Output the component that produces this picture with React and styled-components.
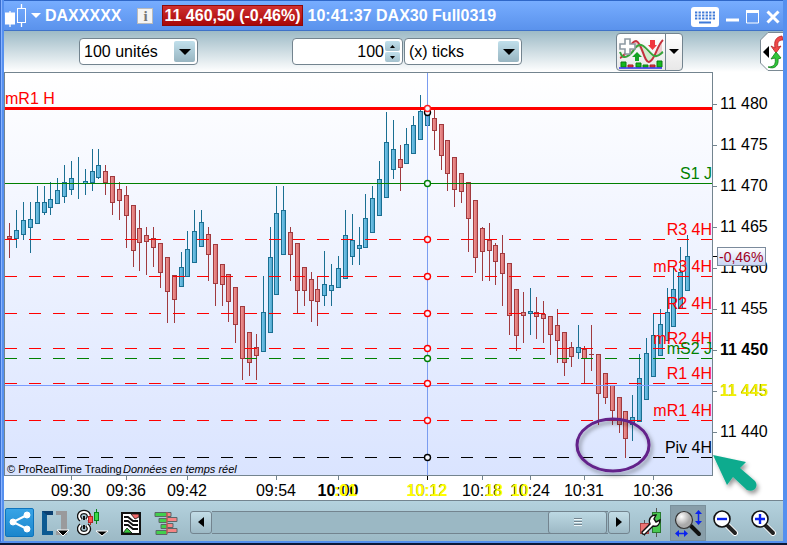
import { useState } from 'react';
import styled, { createGlobalStyle } from 'styled-components';

const UP = 1;
const DOWN = 0;

// x, high, body top, body bottom, low, direction
const candles = [
	[9, 223, 236, 239, 258, DOWN],
	[16, 210, 230, 239, 248, UP],
	[23, 202, 220, 235, 240, UP],
	[30, 202, 219, 228, 253, UP],
	[37, 186, 202, 224, 224, UP],
	[44, 186, 202, 213, 215, UP],
	[50, 182, 199, 208, 215, UP],
	[57, 178, 190, 204, 204, UP],
	[64, 165, 182, 197, 203, UP],
	[71, 161, 178, 190, 195, UP],
	[78, 157, 182, 182, 199, UP],
	[85, 169, 181, 184, 195, UP],
	[92, 149, 171, 183, 191, UP],
	[98, 149, 165, 178, 179, UP],
	[105, 165, 171, 183, 195, DOWN],
	[112, 176, 176, 203, 215, DOWN],
	[119, 182, 189, 201, 220, DOWN],
	[126, 186, 195, 216, 248, DOWN],
	[133, 205, 205, 251, 267, DOWN],
	[139, 210, 228, 243, 271, DOWN],
	[146, 227, 235, 242, 275, DOWN],
	[153, 227, 238, 248, 267, DOWN],
	[160, 243, 243, 273, 288, DOWN],
	[167, 257, 257, 292, 323, DOWN],
	[174, 275, 275, 300, 323, DOWN],
	[181, 252, 267, 287, 287, UP],
	[187, 231, 249, 277, 277, UP],
	[194, 210, 231, 263, 263, UP],
	[201, 210, 222, 247, 247, UP],
	[208, 227, 234, 255, 281, DOWN],
	[215, 244, 244, 284, 306, DOWN],
	[222, 264, 264, 285, 306, DOWN],
	[228, 274, 274, 302, 322, DOWN],
	[235, 287, 287, 325, 343, DOWN],
	[242, 306, 306, 359, 380, DOWN],
	[249, 332, 332, 363, 376, DOWN],
	[256, 334, 347, 356, 380, DOWN],
	[263, 276, 312, 352, 352, UP],
	[270, 227, 257, 333, 333, UP],
	[276, 186, 213, 295, 295, UP],
	[283, 186, 210, 255, 255, UP],
	[290, 227, 232, 255, 281, DOWN],
	[297, 243, 243, 291, 313, DOWN],
	[304, 267, 267, 291, 306, DOWN],
	[311, 272, 279, 301, 322, DOWN],
	[317, 276, 289, 302, 326, DOWN],
	[324, 251, 284, 296, 306, UP],
	[331, 264, 285, 291, 306, UP],
	[338, 256, 268, 288, 288, UP],
	[345, 210, 235, 279, 279, UP],
	[352, 214, 240, 257, 265, UP],
	[359, 227, 245, 249, 265, UP],
	[365, 194, 218, 248, 248, UP],
	[372, 186, 198, 233, 233, UP],
	[379, 161, 179, 216, 216, UP],
	[386, 112, 142, 198, 198, UP],
	[393, 120, 149, 170, 179, UP],
	[400, 145, 159, 168, 191, DOWN],
	[406, 128, 144, 164, 164, UP],
	[413, 116, 125, 154, 154, UP],
	[420, 95, 111, 140, 140, UP],
	[427, 91, 113, 126, 129, UP],
	[434, 110, 118, 131, 150, DOWN],
	[441, 124, 124, 156, 170, DOWN],
	[447, 140, 140, 174, 191, DOWN],
	[454, 157, 157, 190, 207, DOWN],
	[461, 173, 173, 192, 203, DOWN],
	[468, 182, 182, 219, 252, DOWN],
	[475, 200, 200, 258, 273, DOWN],
	[482, 227, 228, 252, 281, DOWN],
	[489, 223, 240, 251, 281, DOWN],
	[495, 243, 245, 262, 285, DOWN],
	[502, 235, 253, 274, 306, DOWN],
	[509, 263, 263, 316, 335, DOWN],
	[516, 289, 289, 336, 351, DOWN],
	[523, 292, 312, 316, 343, DOWN],
	[530, 288, 311, 314, 335, UP],
	[536, 297, 312, 317, 339, DOWN],
	[543, 301, 314, 319, 343, DOWN],
	[550, 316, 316, 335, 355, DOWN],
	[557, 309, 325, 341, 363, DOWN],
	[564, 332, 332, 363, 376, DOWN],
	[571, 342, 347, 357, 367, DOWN],
	[578, 325, 347, 353, 359, UP],
	[584, 346, 349, 359, 383, DOWN],
	[591, 325, 354, 355, 371, DOWN],
	[598, 354, 354, 394, 425, DOWN],
	[605, 373, 373, 398, 404, DOWN],
	[612, 385, 385, 411, 425, DOWN],
	[619, 397, 397, 425, 433, DOWN],
	[625, 411, 411, 439, 458, DOWN],
	[632, 395, 417, 425, 441, UP],
	[639, 354, 378, 422, 422, UP],
	[646, 338, 353, 400, 400, UP],
	[653, 313, 335, 377, 377, UP],
	[660, 309, 324, 356, 356, UP],
	[667, 288, 312, 341, 341, UP],
	[673, 268, 289, 327, 327, UP],
	[680, 247, 272, 309, 309, UP],
	[687, 235, 256, 291, 291, UP],
];

const levels = [
	{ name: 'S1 J', y: 183, color: '#008000', solid: true },
	{ name: 'R3 4H', y: 239, color: '#ff0000' },
	{ name: 'mR3 4H', y: 276, color: '#ff0000' },
	{ name: 'R2 4H', y: 313, color: '#ff0000' },
	{ name: 'mR2 4H', y: 348, color: '#ff0000' },
	{ name: 'mS2 J', y: 358, color: '#008000' },
	{ name: 'R1 4H', y: 383, color: '#ff0000' },
	{ name: 'mR1 4H', y: 420, color: '#ff0000' },
	{ name: 'Piv 4H', y: 457, color: '#000000' },
];

const prices = [
	['11 480', 104],
	['11 475', 145],
	['11 470', 186],
	['11 465', 227],
	['11 460', 268],
	['11 455', 309],
	['11 450', 350, 'bold'],
	['11 445', 391],
	['11 440', 432],
];

const times = [
	['09:30', 71],
	['09:36', 126],
	['09:42', 187],
	['09:54', 276],
	['10:00', 338, 'bold'],
	['10:12', 427],
	['10:18', 482],
	['10:24', 530],
	['10:31', 584],
	['10:36', 653],
];

const Candle = ({ data }) => {
	const [x, high, top, bottom, low, dir] = data;
	const edge = dir === UP ? '#1a6f92' : '#a03a3f';
	const fill = dir === UP ? 'url(#up)' : 'url(#down)';
	const h = bottom - top;

	return (
		<g>
			<rect x={x} y={high} width='1' height={low - high} fill={edge} />
			{h > 0 && <rect x={x - 2} y={top} width='5' height={h} fill={edge} />}
			{h > 2 && <rect x={x - 1} y={top + 1} width='3' height={h - 2} fill={fill} />}
		</g>
	);
};

const Chart = () => (
	<ChartSvg viewBox='4 72 779 428' role='img' aria-label='DAX30 Full0319'>
		<defs>
			<linearGradient id='sky' x1='0' y1='0' x2='0' y2='1'>
				<stop offset='0' stopColor='#ffffff' />
				<stop offset='1' stopColor='#dae4ff' />
			</linearGradient>
			<linearGradient id='up'>
				<stop offset='0' stopColor='#76c6ea' />
				<stop offset='1' stopColor='#4fa6cd' />
			</linearGradient>
			<linearGradient id='down'>
				<stop offset='0' stopColor='#f09492' />
				<stop offset='1' stopColor='#d66e70' />
			</linearGradient>
			<linearGradient id='tag' x1='0' y1='0' x2='0' y2='1'>
				<stop offset='0' stopColor='#ffffff' />
				<stop offset='1' stopColor='#c8d4f4' />
			</linearGradient>
			<filter id='shadow' x='-30%' y='-30%' width='160%' height='160%'>
				<feDropShadow dx='2' dy='3' stdDeviation='2' floodColor='#000' floodOpacity='0.4' />
			</filter>
		</defs>

		<g shapeRendering='crispEdges'>
			<rect x='5' y='73' width='707' height='402' fill='url(#sky)' />
			<rect x='4' y='72' width='709' height='1' fill='#73848f' />
			<rect x='4' y='72' width='1' height='404' fill='#73848f' />
			<rect x='712' y='72' width='1' height='404' fill='#73848f' />
			<rect x='4' y='475' width='709' height='1' fill='#73848f' />
			{candles.map((c) => (
				<Candle key={c[0]} data={c} />
			))}
			<rect x='5' y='107' width='707' height='3' fill='#ff0000' />
			{levels.map(({ name, y, color, solid }) => (
				<line
					key={name}
					x1='5'
					x2='712'
					y1={y + 0.5}
					y2={y + 0.5}
					stroke={color}
					strokeDasharray={solid ? 'none' : '12 12'}
				/>
			))}
			<rect x='5' y='385' width='707' height='1' fill='#7a9cff' />
			<rect x='427' y='73' width='1' height='402' fill='#7a9cf0' />
			{prices.map(([label, y]) => (
				<rect key={label} x='713' y={y} width='4' height='1' fill='#73848f' />
			))}
			{times.map(([label, x]) => (
				<rect key={label} x={x} y='476' width='1' height='4' fill={x === 427 ? '#000' : '#73848f'} />
			))}
			<rect x='713' y='256' width='4' height='1' fill='#000' />
		</g>

		{/* crosshair markers */}
		<g fill='#f4f7ff' strokeWidth='1.4'>
			<circle cx='427.5' cy='112.5' r='3' stroke='#000' />
			<circle cx='427.5' cy='108.5' r='3' stroke='#ff2020' />
			{levels.map(({ name, y, color }) => (
				<circle key={name} cx='427.5' cy={y + 0.5} r='3' stroke={color} />
			))}
		</g>

		<text x='5' y='104' fill='#ff0000'>mR1 H</text>
		{levels.map(({ name, y, color }) => (
			<text key={name} x='712' y={y - 4} fill={color} textAnchor='end'>{name}</text>
		))}
		<SmallText x='7' y='473'>© ProRealTime Trading</SmallText>
		<SmallText x='123' y='473' $italic>Données en temps réel</SmallText>

		{prices.map(([label, y, weight]) => (
			<text key={label} x='720' y={y + 5} fontWeight={weight}>{label}</text>
		))}
		<text x='720' y='396' fill='#f2f200' fontWeight='bold'>11 445</text>
		{times.map(([label, x, weight]) => (
			<text key={label} x={x} y='496' textAnchor='middle' fontWeight={weight}>{label}</text>
		))}
		<g fill='#ffff00' fontWeight='bold'>
			<text x='334' y='496'>:01</text>
			<text x='427' y='496' textAnchor='middle'>10:12</text>
			<text x='485' y='496'>18</text>
			<text x='511' y='496'>10</text>
		</g>

		<rect x='717.5' y='247.5' width='48' height='18' fill='url(#tag)' stroke='#7b8a9c' />
		<text x='719' y='262' fill='#a0001c' fontSize='14'>-0,46%</text>

		<ellipse cx='613' cy='445' rx='36' ry='26' fill='none' stroke='#63208a' strokeWidth='3' filter='url(#shadow)' />
		<path
			d='M713 455 L746 462 L740 468 L755 481 Q758 485 755 489 Q752 492 747 490 L733 477 L727 485 Z'
			fill='#0cab8e'
			filter='url(#shadow)'
		/>
	</ChartSvg>
);

const Arrow = ({ size = 12, color = '#000' }) => (
	<svg width={size} height={size / 2} viewBox='0 0 12 6'>
		<path d='M0 0h12L6 6z' fill={color} />
	</svg>
);

const Magnifier = ({ children }) => (
	<>
		<path d='M16 17l7 7' stroke='#fff' strokeWidth='6' strokeLinecap='round' />
		<path d='M16 17l7 7' stroke='#222' strokeWidth='4' strokeLinecap='round' />
		<circle cx='10' cy='10' r='8' fill='#fff' stroke='#111' strokeWidth='1.6' />
		{children}
	</>
);

const App = () => {
	const [units, setUnits] = useState('100 unités');
	const [count, setCount] = useState('100');
	const [period, setPeriod] = useState('(x) ticks');

	return (
		<>
			<GlobalStyle />
			<Window>
				<TitleBar>
					<svg width='22' height='24' viewBox='0 0 22 24' fill='none' stroke='#fff'>
						<path d='M5 7v16M16.500 0v4M16.500 18v5' strokeWidth='1.3' />
						<rect x='0.500' y='9' width='9' height='11' fill='#fff' />
						<rect x='12.500' y='4.500' width='8' height='14' />
					</svg>
					<MenuButton aria-label='Menu'>
						<Arrow size={10} color='#fff' />
					</MenuButton>
					<Symbol>DAXXXXX</Symbol>
					<InfoButton aria-label='Info'>i</InfoButton>
					<Quote>11 460,50 (-0,46%)</Quote>
					<Title>10:41:37 DAX30 Full0319</Title>
					<WindowControls>
						<TitleButton aria-label='Keyboard'>
							<svg width='28' height='20' viewBox='0 0 28 20'>
								<rect width='28' height='20' rx='3' fill='#fff' />
								<path
									d='M4 5.500h20M4 8.500h20M4 11.500h20'
									stroke='#3f7ad8'
									strokeWidth='2'
									strokeDasharray='2.300 1.240'
								/>
								<path d='M8 15.500h12' stroke='#3f7ad8' strokeWidth='2' />
							</svg>
						</TitleButton>
						<TitleButton aria-label='Minimize'>
							<svg width='13' height='20' viewBox='0 0 13 20'>
								<path d='M0 13h13' stroke='#fff' strokeWidth='3' />
							</svg>
						</TitleButton>
						<TitleButton aria-label='Maximize'>
							<svg width='13' height='14' viewBox='0 0 13 14'>
								<path d='M0.500 1v12h12v-12' fill='none' stroke='#fff' />
								<path d='M0 1.500h13' stroke='#fff' strokeWidth='3' />
							</svg>
						</TitleButton>
						<TitleButton aria-label='Close'>
							<svg width='14' height='14' viewBox='0 0 14 14'>
								<path d='M1.500 1.500l11 11M12.500 1.500l-11 11' stroke='#fff' strokeWidth='3' />
							</svg>
						</TitleButton>
					</WindowControls>
				</TitleBar>

				<Toolbar>
					<SelectBox $width={119}>
						<select aria-label='Unités' value={units} onChange={(e) => setUnits(e.target.value)}>
							<option>100 unités</option>
						</select>
						<SelectArrow><Arrow /></SelectArrow>
					</SelectBox>
					<FieldGroup>
						<NumberBox>
							<input aria-label='Ticks' value={count} onChange={(e) => setCount(e.target.value)} />
							<Spinner>
								<button aria-label='Plus' onClick={() => setCount(String(Number(count) + 1))}>
									<svg width='5' height='3' viewBox='0 0 5 3'><path d='M0 3h5L2.500 0z' /></svg>
								</button>
								<button aria-label='Moins' onClick={() => setCount(String(Number(count) - 1))}>
									<svg width='5' height='3' viewBox='0 0 5 3'><path d='M0 0h5L2.500 3z' /></svg>
								</button>
							</Spinner>
						</NumberBox>
						<SelectBox $width={118}>
							<select aria-label='Période' value={period} onChange={(e) => setPeriod(e.target.value)}>
								<option>(x) ticks</option>
							</select>
							<SelectArrow><Arrow /></SelectArrow>
						</SelectBox>
					</FieldGroup>
					<IndicatorGroup>
						<button aria-label='Indicateurs'>
							<svg width='46' height='34' viewBox='0 0 46 34'>
								<path d='M2 22C9 20 11 8 17 6C24 6 26 28 32 27C37 26 41 12 44 5V20C40 18 38 24 33 20C28 17 25 8 19 13C13 19 9 25 2 22z' fill='#e8b0b4' opacity='.6' />
								<path d='M20 12C26 9 30 22 37 22L31 27C25 24 24 15 20 12z' fill='#cfeecb' />
								<path d='M2 23C9 21 12 6 18 6C24 7 26 28 31 27C37 26 39 10 45 5' fill='none' stroke='#c4313c' strokeWidth='2' />
								<path d='M2 17C5 27 13 20 17 13C25 3 31 20 37 21C41 22 43 18 45 17' fill='none' stroke='#37a53b' strokeWidth='2' />
								<path d='M7 4h5v5h5v5h-5v5h-5v-5h-5v-5h5z' fill='#fff' stroke='#8d99a2' strokeWidth='1.600' />
								<path d='M32 5h5v5h2l-4.500 5l-4.500-5h2z' fill='#f0363d' />
								<path d='M21 26h-4v-4h-3l5-5l5 5h-3z' fill='#12a321' />
								<path d='M3 27h5v5H3zM18 28h5v4h-5zM25 30h5v2h-5zM39 26h5v6h-5z' fill='#14b81d' stroke='#0b7d12' />
								<path d='M10 30h5v2h-5zM32 30h5v2h-5z' fill='#e8434b' stroke='#a01820' />
								<path d='M1 33h43' stroke='#2a2ae8' strokeWidth='1.400' />
							</svg>
						</button>
						<button aria-label='Liste des indicateurs'><Arrow size={10} /></button>
					</IndicatorGroup>
					<SideButton aria-label='Ordres'>
						<svg width='23' height='41' viewBox='0 0 23 41'>
							<path d='M23 1.500H8L0.500 9v23L8 39.500h15' fill='#fff' stroke='#7b8a94' />
							<path d='M3 21l6-6v12z' fill='#000' />
							<path d='M22 5C15 6 14 11 15 17l-4-2l5 7l5-7l-3 1C17 11 19 9 23 9z' fill='#f04848' stroke='#b52026' strokeWidth='.8' />
							<path d='M8 36C15 36 16 32 15 27l-4 1l5-7l5 6l-3 1C19 34 15 39 8 36z' fill='#31c63a' stroke='#127d1b' strokeWidth='.8' />
						</svg>
					</SideButton>
				</Toolbar>

				<Chart />

				<BottomBar>
					<ShareButton aria-label='Partager'>
						<svg width='22' height='22' viewBox='0 0 22 22' fill='#fff' stroke='#fff'>
							<path d='M18 4L4 11l14 7' fill='none' strokeWidth='2' />
							<circle cx='18' cy='4' r='3' />
							<circle cx='4' cy='11' r='3' />
							<circle cx='18' cy='18' r='3' />
						</svg>
					</ShareButton>
					<IconButton $width={28} aria-label='Affichage'>
						<svg width='28' height='28' viewBox='0 0 28 28'>
							<path d='M12 2H1v24h11v-4H6V6h6z' fill='#0d5a92' />
							<path d='M6 6H12V2H1z' fill='#0b3f70' />
							<path d='M15 2h11v24H15v-4h5V6h-5z' fill='#9a9a9c' />
							<path d='M16 21h12l-6 6z' fill='#000' stroke='#fff' />
						</svg>
					</IconButton>
					<IconButton $width={48} aria-label='Lier'>
						<svg width='32' height='30' viewBox='0 0 32 30' fill='none'>
							<path d='M4 12C0 8 3 4 7 4S14 8 10 12M4 17C0 21 3 25 7 25S14 21 10 17' stroke='#111' strokeWidth='4.500' />
							<path d='M4 12C0 8 3 4 7 4S14 8 10 12M4 17C0 21 3 25 7 25S14 21 10 17' stroke='#fff' strokeWidth='1.800' />
							<path d='M7 8v13' stroke='#111' strokeWidth='2' strokeDasharray='4 5' />
							<path d='M13.500 6v11' stroke='#b02525' />
							<rect x='11.500' y='8.500' width='4' height='6' fill='#ff5050' stroke='#b02525' />
							<path d='M19.500 1v15' stroke='#08851a' />
							<rect x='17.500' y='4.500' width='4' height='8' fill='#3bd94a' stroke='#08851a' />
							<path d='M19 23h12l-6 5z' fill='#000' stroke='#fff' />
						</svg>
					</IconButton>
					<IconButton $width={28} aria-label='Rapport'>
						<svg width='20' height='24' viewBox='0 0 20 24'>
							<rect x='1' y='2' width='18' height='21' fill='#fff' stroke='#111' strokeWidth='2' />
							<path d='M10 3h8v3l-4 2z' fill='#f06a6a' stroke='#111' strokeWidth='.800' />
							<path d='M2 22l4-5l5 5z' fill='#38c83c' stroke='#111' strokeWidth='.800' />
							<path d='M3 6h4l5 4h5M3 10h4l5 4h5M3 14h4l5 4h5' fill='none' stroke='#111' strokeWidth='1.800' />
						</svg>
					</IconButton>
					<IconButton $width={42} aria-label='Carnet'>
						<svg width='24' height='24' viewBox='0 0 24 24' stroke='#5c6668'>
							<path d='M1 1.500h12v4H1zM5 7.500h8v4H5zM7 13.500h6v4H7zM2 19.500h11v4H2z' fill='#42cf4c' />
							<path d='M13 1.500h4v4h-4zM13 6.500h10v4H13zM13 12.500h6v4h-6zM13 17.500h10v4H13z' fill='#f48484' />
							<path d='M13 1v22' stroke='#e05050' />
						</svg>
					</IconButton>
					<ScrollBar>
						<ScrollButton aria-label='Reculer'>
							<svg width='6' height='10' viewBox='0 0 6 10'><path d='M6 0v10L0 5z' /></svg>
						</ScrollButton>
						<ScrollTrack>
							<ScrollThumb aria-label='Position'>
								<svg width='8' height='8' viewBox='0 0 8 8'>
									<path d='M0 1.500h8M0 4.500h8M0 7.500h8' stroke='#eef6f8' />
									<path d='M0 .500h8M0 3.500h8M0 6.500h8' stroke='#73848f' />
								</svg>
							</ScrollThumb>
						</ScrollTrack>
						<ScrollButton aria-label='Avancer'>
							<svg width='6' height='10' viewBox='0 0 6 10'><path d='M0 0v10l6-5z' /></svg>
						</ScrollButton>
					</ScrollBar>
					<IconButton $width={40} aria-label='Configurer'>
						<svg width='23' height='29' viewBox='0 0 23 29'>
							<path d='M5.500 12v16M17.500 0v29' stroke='#555' />
							<rect x='1.500' y='15.500' width='8' height='10' fill='#ec7474' stroke='#a44' />
							<rect x='13.500' y='4.500' width='8' height='20' fill='#48c850' stroke='#287a2e' />
							<path d='M3 24L11 16C9 11 12 7 17 7l-2 4l2 3l4-2C21 17 18 19 14 18L6 26Q3 27 3 24z' fill='#fff' stroke='#111' strokeWidth='1.400' />
						</svg>
					</IconButton>
					<IconButton $width={36} $active aria-label='Ajuster'>
						<svg width='28' height='28' viewBox='0 0 28 28'>
							<defs>
								<radialGradient id='lens' cx='.35' cy='.3'>
									<stop offset='0' stopColor='#fff' />
									<stop offset='1' stopColor='#aaa' />
								</radialGradient>
							</defs>
							<path d='M17 17l8 8' stroke='#111' strokeWidth='4' strokeLinecap='round' />
							<circle cx='10' cy='11' r='8.500' fill='url(#lens)' stroke='#333' strokeWidth='1.200' />
							<path d='M24.500 4v8M4 24.500h7' stroke='#0a22f0' strokeWidth='1.500' />
							<path d='M21 5l3.500-4L28 5zM21 12l3.500 4l3.500-4zM5 21l-4 3.500L5 28zM10 21l4 3.500L10 28z' fill='#0a22f0' />
						</svg>
					</IconButton>
					<IconButton $width={38} aria-label='Zoom arrière'>
						<svg width='27' height='27' viewBox='0 0 27 27'>
							<Magnifier><path d='M5 10h10' stroke='#0a22f0' strokeWidth='2.400' /></Magnifier>
						</svg>
					</IconButton>
					<IconButton $width={38} aria-label='Zoom avant'>
						<svg width='27' height='27' viewBox='0 0 27 27'>
							<Magnifier><path d='M5 10h10M10 5v10' stroke='#0a22f0' strokeWidth='2.400' /></Magnifier>
						</svg>
					</IconButton>
				</BottomBar>
			</Window>
		</>
	);
};

export default App;

const GlobalStyle = createGlobalStyle`
	* {
		box-sizing: border-box;
	}
	body {
		margin: 0;
		background: #0c1836;
		font-family: 'Liberation Sans', Arial, sans-serif;
		font-size: 16px;
	}
	button, input, select {
		margin: 0;
		padding: 0;
		border: 0;
		background: none;
		color: inherit;
		font: inherit;
	}
	svg {
		display: block;
		flex: none;
	}
`;

const Window = styled.div`
	display: flex;
	flex-direction: column;
	padding-left: 3px;
	border: solid #5590ef;
	border-width: 0 4px 2px 1px;
	border-left-color: #3a6fd0;
	background: linear-gradient(90deg, #8ab4ff 1px, #5590ef 1px) 0 0 / 3px 100% no-repeat #fff;
`;

const TitleBar = styled.header`
	display: flex;
	align-items: center;
	height: 31px;
	padding-left: 1px;
	border-top: 1px solid #2f67c8;
	border-bottom: 1px solid #3f72c8;
	background: linear-gradient(#77adff, #5a92ec);
	color: #fff;
	font-weight: bold;
	white-space: nowrap;
`;

const TitleButton = styled.button`
	display: flex;
	align-items: center;
	justify-content: center;
`;

const MenuButton = styled(TitleButton)`
	width: 12px;
	margin-left: 3px;
`;

const Symbol = styled.span`
	margin-left: 3px;
`;

const InfoButton = styled.button`
	width: 16px;
	height: 16px;
	margin: 0 9px 0 16px;
	border: 1px solid #bbb;
	background: #f4f4f4;
	color: #777;
	font: bold 15px/14px 'Liberation Serif', serif;
`;

const Quote = styled.span`
	height: 21px;
	padding: 0 1px;
	border: 1px solid #8e0a0a;
	background: linear-gradient(#cf3030, #a80808);
	line-height: 19px;
`;

const Title = styled.h1`
	margin: 0 0 0 5px;
	font-size: 16px;
`;

const WindowControls = styled.div`
	display: flex;
	align-items: center;
	gap: 7px;
	margin-left: auto;
	padding: 2px 3px 0 0;
`;

const Toolbar = styled.div`
	display: flex;
	align-items: center;
	height: 41px;
	padding-left: 75px;
	background: linear-gradient(#9dbac6, #fff);
`;

const SelectBox = styled.label`
	position: relative;
	display: flex;
	width: ${(props) => props.$width}px;
	height: 27px;
	border: 1px solid #73848f;
	border-radius: 4px;
	background: #fff;

	select {
		flex: 1;
		padding-left: 4px;
		appearance: none;
	}
`;

const SelectArrow = styled.span`
	position: absolute;
	top: 2px;
	right: 2px;
	bottom: 2px;
	display: flex;
	align-items: center;
	justify-content: center;
	width: 21px;
	border-radius: 2px;
	background: linear-gradient(#c0dfeb, #98b5c1);
	pointer-events: none;
`;

const FieldGroup = styled.div`
	display: flex;
	gap: 1px;
	margin-left: 94px;
`;

const NumberBox = styled.label`
	display: flex;
	align-items: center;
	width: 111px;
	height: 27px;
	padding-right: 2px;
	border: 1px solid #73848f;
	border-radius: 4px;
	background: #fff;

	input {
		flex: 1;
		min-width: 0;
		text-align: right;
	}
`;

const Spinner = styled.span`
	display: flex;
	flex-direction: column;
	gap: 1px;
	margin-left: 1px;

	button {
		display: flex;
		align-items: center;
		justify-content: center;
		width: 15px;
		height: 10px;
		border-radius: 2px;
		background: linear-gradient(#c0dfeb, #a4c1cd);
	}
`;

const IndicatorGroup = styled.div`
	display: flex;
	height: 38px;
	margin-left: auto;
	border: 1px solid #73848f;
	border-radius: 4px;
	background: linear-gradient(#fff, #e8e8e8);

	button {
		display: flex;
		align-items: center;
		justify-content: center;
		width: 16px;
	}
	button:first-child {
		width: 49px;
		border-right: 1px solid #73848f;
	}
`;

const SideButton = styled.button`
	margin-left: 77px;
`;

const ChartSvg = styled.svg`
	width: 100%;
	height: auto;
	font-family: 'Liberation Sans', Arial, sans-serif;
	font-size: 16px;
`;

const SmallText = styled.text`
	font-size: 11px;
	font-style: ${(props) => (props.$italic ? 'italic' : 'normal')};
`;

const BottomBar = styled.footer`
	display: flex;
	align-items: center;
	height: 41px;
	padding-right: 1px;
	border-top: 1px solid #73848f;
	background: linear-gradient(#b4d2de, #9cb9c5);
`;

const ShareButton = styled.button`
	display: flex;
	align-items: center;
	justify-content: center;
	width: 29px;
	height: 29px;
	margin: 2px 7px 0 1px;
	border: 1px solid #0d74bd;
	border-radius: 2px;
	background: linear-gradient(#38a4e6, #1b86cc);
`;

const IconButton = styled.button`
	display: flex;
	align-items: center;
	justify-content: center;
	width: ${(props) => props.$width}px;
	height: 36px;
	margin-top: 3px;
	border: ${(props) => (props.$active ? '1px solid #7a919c' : '0')};
	background: ${(props) => (props.$active ? '#889ea9' : 'none')};
`;

const ScrollBar = styled.div`
	display: flex;
	flex: 1;
	height: 23px;
	margin: 2px 0 0 3px;
`;

const ScrollButton = styled.button`
	display: flex;
	align-items: center;
	justify-content: center;
	width: 22px;
	border: 1px solid #73848f;
	border-radius: 3px;
	background: linear-gradient(#c3dde7, #9db9c5);
`;

const ScrollTrack = styled.div`
	display: flex;
	flex: 1;
	justify-content: flex-end;
	border: solid #73848f;
	border-width: 1px 0;
	background: #9bb8c4;
`;

const ScrollThumb = styled.button`
	display: flex;
	align-items: center;
	justify-content: center;
	width: 59px;
	margin: -1px 1px -1px 0;
	border: 1px solid #73848f;
	border-radius: 3px;
	background: linear-gradient(#bcd8e3, #9db9c5);
`;
